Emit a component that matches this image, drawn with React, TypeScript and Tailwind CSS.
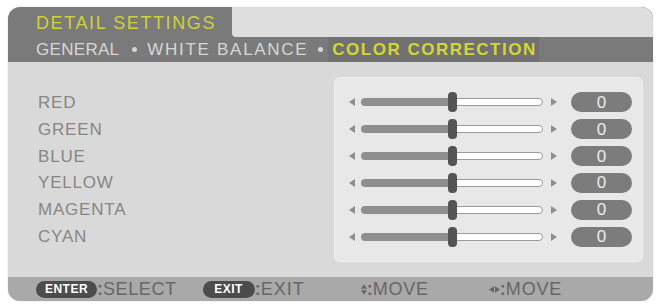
import React from "react";

const rows = ["RED", "GREEN", "BLUE", "YELLOW", "MAGENTA", "CYAN"];

function Tri({ dir, className }: { dir: "l" | "r" | "u" | "d"; className?: string }) {
  const pts =
    dir === "l" ? "6,0 6,8 0,4" : dir === "r" ? "0,0 0,8 6,4" : dir === "u" ? "0,6 8,6 4,0" : "0,0 8,0 4,6";
  const box = dir === "l" || dir === "r" ? "0 0 6 8" : "0 0 8 6";
  return (
    <svg viewBox={box} className={className} fill="currentColor">
      <polygon points={pts} />
    </svg>
  );
}

function SliderRow() {
  return (
    <div className="flex h-[27px] items-center">
      <Tri dir="l" className="ml-[14px] h-[8px] w-[6px] text-[#8e8e8e]" />
      <div className="relative ml-[6px] flex h-[8px] w-[182px] items-center">
        <div className="h-full w-[92px] rounded-l-full bg-[#8f8f8f]" />
        <div className="h-full flex-1 rounded-r-full border border-[#9a9a9a] bg-white" />
        <div className="absolute left-[87px] top-[-6px] h-[20px] w-[9px] rounded-[4px] bg-[#545454]" />
      </div>
      <Tri dir="r" className="ml-[8px] h-[8px] w-[6px] text-[#8e8e8e]" />
      <div className="ml-[14px] flex h-[20px] w-[61px] items-center justify-center rounded-full bg-[#7c7c7c] text-[17px] leading-none text-[#ececec]">
        0
      </div>
    </div>
  );
}

export default function App() {
  return (
    <div
      className="h-[306px] w-[662px] bg-white pl-[8px] pt-[7px]"
      style={{ fontFamily: '"Liberation Sans", Arial, sans-serif' }}
    >
      <div className="flex w-[645px] flex-col overflow-hidden rounded-[12px] shadow-[0_0_1px_rgba(0,0,0,0.35)]">
        {/* title tab */}
        <div className="flex h-[30px] bg-[#7a7a7a]">
          <div className="flex w-[224px] items-center pl-[28px] pt-[2px] text-[18px] leading-none tracking-[1.6px] text-[#cfd13a]">
            DETAIL SETTINGS
          </div>
          <div className="flex-1 rounded-bl-[4px] rounded-tr-[12px] bg-[#dedede]" />
        </div>

        {/* page tabs */}
        <div className="flex h-[25px] items-center bg-[#7a7a7a] pl-[28px] text-[17px] leading-none tracking-[0.3px] text-[#d6d6d6]">
          <span>GENERAL</span>
          <span className="ml-[13px] mr-[10px] h-[5px] w-[5px] rounded-full bg-[#d6d6d6]" />
          <span className="tracking-[1.7px]">WHITE BALANCE</span>
          <span className="ml-[10px] mr-[5px] h-[5px] w-[5px] rounded-full bg-[#d6d6d6]" />
          <span className="flex h-full items-center bg-[#717171] pl-[4px] pr-[2px] font-bold tracking-[1.5px] text-[#d4d636]">
            COLOR CORRECTION
          </span>
        </div>

        {/* content */}
        <div className="flex h-[215px] bg-[#d9d9d9] pb-[15px] pl-[30px] pr-[10px] pt-[15px]">
          <div className="flex flex-1 flex-col py-[12px] text-[17px] leading-none tracking-[0.8px] text-[#868686]">
            {rows.map((r) => (
              <div key={r} className="flex h-[27px] items-center">
                {r}
              </div>
            ))}
          </div>
          <div className="flex w-[309px] flex-col rounded-[6px] border border-[#f0f0f0] bg-[#e8e8e8] py-[11px]">
            {rows.map((r) => (
              <SliderRow key={r} />
            ))}
          </div>
        </div>

        {/* key guide */}
        <div className="flex h-[24px] items-center bg-[#a9a9a9] pl-[28px] text-[18px] leading-none text-[#666666]">
          <span className="flex h-[17px] w-[61px] items-center justify-center rounded-full bg-[#4c4c4c] text-[12px] font-bold tracking-[0.5px] text-white">
            ENTER
          </span>
          <span className="font-bold">:</span>
          <span className="tracking-[0.6px]">SELECT</span>
          <span className="ml-[26px] flex h-[17px] w-[52px] items-center justify-center rounded-full bg-[#4c4c4c] text-[12px] font-bold tracking-[0.5px] text-white">
            EXIT
          </span>
          <span className="font-bold">:</span>
          <span className="tracking-[1px]">EXIT</span>
          <span className="ml-[56px] flex flex-col gap-[1px]">
            <Tri dir="u" className="h-[5px] w-[6px]" />
            <Tri dir="d" className="h-[5px] w-[6px]" />
          </span>
          <span className="font-bold">:</span>
          <span className="tracking-[0.8px]">MOVE</span>
          <span className="ml-[60px] flex items-center gap-[1px]">
            <Tri dir="l" className="h-[7px] w-[5px]" />
            <Tri dir="r" className="h-[7px] w-[5px]" />
          </span>
          <span className="font-bold">:</span>
          <span className="tracking-[0.8px]">MOVE</span>
        </div>
      </div>
    </div>
  );
}
